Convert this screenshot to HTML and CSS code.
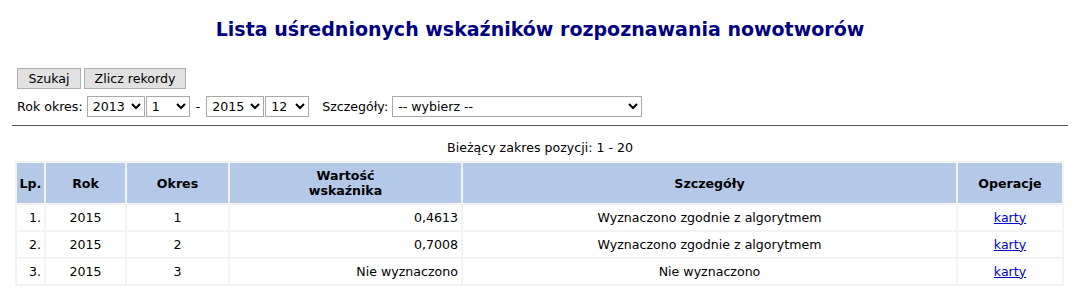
FILE: index.html
```html
<!DOCTYPE html>
<html lang="pl">
<head>
<meta charset="UTF-8">
<title>Lista uśrednionych wskaźników</title>
<link rel="stylesheet" href="styles.css">
</head>
<body>

<h1>Lista uśrednionych wskaźników rozpoznawania nowotworów</h1>

<form class="filters">
  <div class="buttons">
    <button type="button" class="b-search">Szukaj</button>
    <button type="button" class="b-count">Zlicz rekordy</button>
  </div>
  <div class="row">
    <label>Rok okres:</label>
    <select class="sel-year"><option>2013</option></select>
    <select class="sel-month"><option>1</option></select>
    <span class="dash">-</span>
    <select class="sel-year"><option>2015</option></select>
    <select class="sel-month"><option>12</option></select>
    <label class="lbl-det">Szczegóły:</label>
    <select class="sel-det"><option>-- wybierz --</option></select>
  </div>
</form>

<hr>

<div class="range">Bieżący zakres pozycji: 1 - 20</div>

<table class="list">
  <colgroup>
    <col class="c-lp"><col class="c-rok"><col class="c-okres">
    <col class="c-val"><col class="c-det"><col class="c-op">
  </colgroup>
  <tr>
    <th>Lp.</th>
    <th>Rok</th>
    <th>Okres</th>
    <th>Wartość<br>wskaźnika</th>
    <th>Szczegóły</th>
    <th>Operacje</th>
  </tr>
  <tr>
    <td class="r">1.</td><td>2015</td><td>1</td><td class="r">0,4613</td>
    <td>Wyznaczono zgodnie z algorytmem</td><td><a href="#">karty</a></td>
  </tr>
  <tr>
    <td class="r">2.</td><td>2015</td><td>2</td><td class="r">0,7008</td>
    <td>Wyznaczono zgodnie z algorytmem</td><td><a href="#">karty</a></td>
  </tr>
  <tr>
    <td class="r">3.</td><td>2015</td><td>3</td><td class="r">Nie wyznaczono</td>
    <td>Nie wyznaczono</td><td><a href="#">karty</a></td>
  </tr>
</table>

</body>
</html>
```

FILE: styles.css
```css
body {
  font-family: "DejaVu Sans", Verdana, sans-serif;
  font-size: 12.6px;
  color: #000;
  background: #fff;
  margin: 0;
  padding: 0 12px;
}
h1 {
  color: #000080;
  font-size: 19px;
  text-align: center;
  margin: 0;
  padding-top: 18px;
  height: 50px;
  box-sizing: border-box;
}
.filters { padding: 18px 0 0 5px; }
.buttons { display: flex; gap: 3px; }
button {
  font: inherit;
  height: 21px;
  padding: 0;
  background: #e1e1e1;
  border: 1px solid #adadad;
  color: #000;
}
.b-search { width: 64px; }
.b-count { width: 102px; }
.row {
  display: flex;
  align-items: center;
  margin-top: 7px;
  gap: 1px;
}
label { margin-right: 3px; }
select {
  font: inherit;
  height: 21px;
  border: 1px solid #a9a9a9;
  background: #fff;
  color: #000;
  padding: 0 1px;
}
.sel-year { width: 58px; }
.sel-month { width: 44px; }
.dash { margin: 0 5px 0 5px; }
.lbl-det { margin-left: 12px; }
.sel-det { width: 250px; }
hr {
  border: none;
  border-top: 1px solid #555;
  margin: 8px 0 0;
}
.range {
  text-align: center;
  padding-top: 14px;
  height: 35px;
  box-sizing: border-box;
}
.list {
  table-layout: fixed;
  width: 1049px;
  margin-left: 3px;
  border-spacing: 2px;
  background: #f3f3f3;
  border-collapse: separate;
}
.list th {
  background: #b4c9e8;
  height: 40px;
  padding: 0 2px;
  font-weight: bold;
}
.list td {
  background: #fff;
  text-align: center;
  height: 24px;
  padding: 0 3px 1px;
}
.list td.r { text-align: right; }
.c-lp { width: 27px; }
.c-rok { width: 79px; }
.c-okres { width: 101px; }
.c-val { width: 231px; }
.c-det { width: 493px; }
.c-op { width: 104px; }
a { color: #00c; }
```
